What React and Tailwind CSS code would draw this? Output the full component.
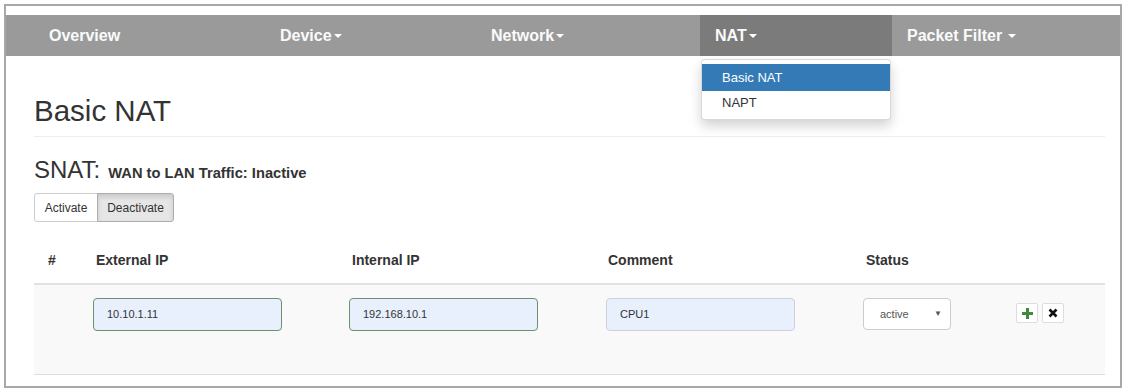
const navItems = [
  { label: 'Overview', w: 'w-[231px]' },
  { label: 'Device', w: 'w-[211px]', caret: true },
  { label: 'Network', w: 'w-[224px]', caret: true },
  { label: 'NAT', w: 'w-[192px]', caret: true, active: true },
  { label: 'Packet Filter', w: 'flex-1', caret: true, space: true },
];

const Caret = () => (
  <span className="inline-block w-0 h-0 ml-[2px] align-middle border-t-[4px] border-t-white border-x-[4px] border-x-transparent"></span>
);

const App = () => {
  return (
    <div className="w-[1125px] h-[392px] bg-white pt-[4px] pl-[4px] font-['Liberation_Sans',Arial,sans-serif] text-[#333]">
      <div className="w-[1118px] h-[384px] border-2 border-[#a8a8a8] pt-[9px]">
        {/* Top nav */}
        <nav className="relative flex h-[41px] bg-[#9a9a9a] pl-[28px]">
          {navItems.map((item) => (
            <div
              key={item.label}
              className={`relative flex items-center px-[15px] text-[16px] font-bold text-[#fafafa] ${item.w} ${item.active ? 'bg-[#7b7b7b]' : ''}`}
            >
              <span>{item.label}</span>
              {item.space && <span className="w-[4px]"></span>}
              {item.caret && <Caret />}
              {item.active && (
                <div className="absolute left-[1px] top-[44px] w-[190px] bg-white border border-[rgba(0,0,0,0.15)] rounded-[4px] shadow-[0_6px_12px_rgba(0,0,0,0.175)] py-[4px] text-[13px] font-normal z-10">
                  <div className="h-[27px] flex items-center px-[20px] bg-[#337ab7] text-white">Basic NAT</div>
                  <div className="h-[24px] flex items-center px-[20px] text-[#333]">NAPT</div>
                </div>
              )}
            </div>
          ))}
        </nav>

        <div className="pl-[28px] pr-[15px]">
          {/* Page title */}
          <h1 className="mt-[39px] text-[29.5px] leading-[32px] pb-[9px] border-b border-[#eeeeee]">Basic NAT</h1>

          {/* SNAT status */}
          <div className="mt-[19px] flex items-baseline leading-[28px]">
            <span className="text-[24px]">SNAT:</span>
            <span className="ml-[8px] text-[14.7px] font-bold">WAN to LAN Traffic: Inactive</span>
          </div>

          <div className="mt-[6px] inline-flex text-[12px]">
            <button className="h-[29px] w-[64px] bg-white border border-[#cccccc] rounded-l-[3px]">Activate</button>
            <button className="h-[29px] w-[77px] -ml-px bg-[#e6e6e6] border border-[#adadad] rounded-r-[3px] shadow-[inset_0_3px_5px_rgba(0,0,0,0.125)]">Deactivate</button>
          </div>

          {/* Table */}
          <div className="mt-[28px] text-[14px]">
            <div className="grid grid-cols-[54px_256px_256px_258px_150px_1fr] font-bold leading-[20px] pb-[13px] border-b-2 border-[#e2e2e2]">
              <div className="pl-[14px]">#</div>
              <div className="pl-[8px]">External IP</div>
              <div className="pl-[8px]">Internal IP</div>
              <div className="pl-[8px]">Comment</div>
              <div className="pl-[8px]">Status</div>
              <div></div>
            </div>
            <div className="grid grid-cols-[54px_256px_256px_258px_150px_1fr] h-[90px] bg-[#f9f9f9] border-b border-[#dddddd] pt-[13px] text-[11px]">
              <div></div>
              <div className="pl-[5px]">
                <div className="w-[189px] h-[33px] flex items-center pl-[13px] bg-[#e8f0fe] border border-[#6f8f6f] rounded-[4px]">10.10.1.11</div>
              </div>
              <div className="pl-[5px]">
                <div className="w-[189px] h-[33px] flex items-center pl-[13px] bg-[#e8f0fe] border border-[#6f8f6f] rounded-[4px]">192.168.10.1</div>
              </div>
              <div className="pl-[6px]">
                <div className="w-[189px] h-[33px] flex items-center pl-[13px] bg-[#e8f0fe] border border-[#cbd2dc] rounded-[4px]">CPU1</div>
              </div>
              <div className="pl-[5px]">
                <div className="w-[88px] h-[32px] flex items-center justify-between pl-[16px] pr-[8px] bg-white border border-[#cccccc] rounded-[4px] text-[#555]">
                  <span>active</span>
                  <span className="text-[8px]">▼</span>
                </div>
              </div>
              <div className="pl-[8px] pt-[5px] flex gap-[4px]">
                <button className="w-[22px] h-[20px] flex items-center justify-center bg-white border border-[#dddddd] rounded-[2px]">
                  <svg width="11" height="11" viewBox="0 0 11 11">
                    <path d="M4 0h3v4h4v3H7v4H4V7H0V4h4z" fill="#3f8a3c" />
                  </svg>
                </button>
                <button className="w-[22px] h-[20px] flex items-center justify-center bg-white border border-[#dddddd] rounded-[2px]">
                  <svg width="10" height="10" viewBox="0 0 10 10">
                    <path d="M1.5 1.5L8.5 8.5M8.5 1.5L1.5 8.5" stroke="#111" strokeWidth="2.6" />
                  </svg>
                </button>
              </div>
            </div>
          </div>
        </div>
      </div>
    </div>
  );
};

export default App;
